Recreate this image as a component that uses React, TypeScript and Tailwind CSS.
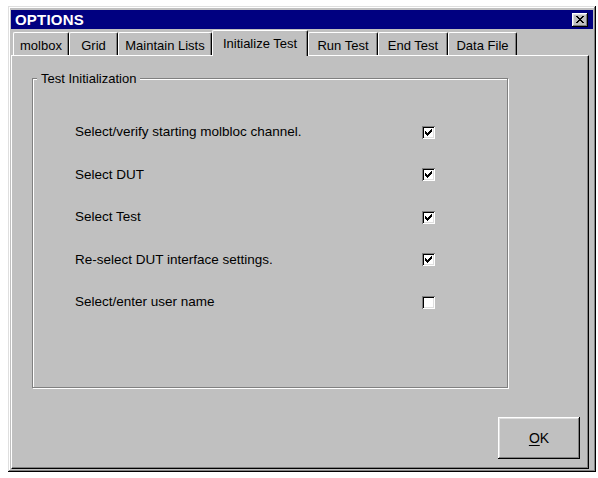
import React from 'react';

// Win95 style "OPTIONS" dialog, Initialize Test tab

const tabs = [
  { label: 'molbox', width: 'w-[56px]' },
  { label: 'Grid', width: 'w-[49px]' },
  { label: 'Maintain Lists', width: 'w-[94px]' },
  { label: 'Initialize Test', width: 'w-[96px]', active: true },
  { label: 'Run Test', width: 'w-[70px]' },
  { label: 'End Test', width: 'w-[70px]' },
  { label: 'Data File', width: 'w-[69px]' },
];

const steps = [
  { label: 'Select/verify starting molbloc channel.', checked: true },
  { label: 'Select DUT', checked: true },
  { label: 'Select Test', checked: true },
  { label: 'Re-select DUT interface settings.', checked: true },
  { label: 'Select/enter user name', checked: false },
];

const CheckBox: React.FC<{ checked: boolean }> = ({ checked }) => (
  <span className="block w-[13px] h-[13px] bg-white shadow-[inset_1px_1px_0_#808080,inset_-1px_-1px_0_#ffffff,inset_2px_2px_0_#000000,inset_-2px_-2px_0_#dfdfdf]">
    {checked && (
      <svg width="13" height="13" viewBox="0 0 13 13" shapeRendering="crispEdges">
        <path
          fill="#000"
          d="M9 3h1v1h-1z M8 4h2v1h-2z M3 5h1v1h-1z M7 5h3v1h-3z M3 6h2v1h-2z M6 6h3v1h-3z M3 7h5v1h-5z M4 8h3v1h-3z M5 9h1v1h-1z"
        />
      </svg>
    )}
  </span>
);

const App: React.FC = () => {
  return (
    <div className="w-[598px] h-[478px] bg-white pl-[8px] pt-[6px] font-['Liberation_Sans',Arial,sans-serif] text-black">
      {/* window frame */}
      <div className="w-[588px] h-[466px] bg-[#c0c0c0] px-[3px] pt-[4px] pb-[3px] flex flex-col shadow-[inset_-1px_-1px_0_#000000,inset_1px_1px_0_#dfdfdf,inset_-2px_-2px_0_#808080,inset_2px_2px_0_#ffffff]">
        {/* title bar */}
        <div className="h-[19px] bg-[#000080] flex items-center justify-between pl-[4px] pr-[5px]">
          <span className="text-white font-bold text-[15px] leading-none tracking-[0.2px]">OPTIONS</span>
          <span className="w-[16px] h-[14px] bg-[#c0c0c0] flex items-center justify-center shadow-[inset_-1px_-1px_0_#000000,inset_1px_1px_0_#ffffff,inset_-2px_-2px_0_#808080,inset_2px_2px_0_#dfdfdf]">
            <svg width="8" height="7" viewBox="0 0 8 7" shapeRendering="crispEdges">
              <path
                fill="#000"
                d="M0 0h2v1h-2z M6 0h2v1h-2z M1 1h2v1h-2z M5 1h2v1h-2z M2 2h4v1h-4z M3 3h2v1h-2z M2 4h4v1h-4z M1 5h2v1h-2z M5 5h2v1h-2z M0 6h2v1h-2z M6 6h2v1h-2z"
              />
            </svg>
          </span>
        </div>

        {/* tab strip */}
        <div className="mt-[1px] h-[25px] flex items-end pl-[2px] relative z-10 text-[13px]">
          {tabs.map((tab) =>
            tab.active ? (
              <div
                key={tab.label}
                className={`${tab.width} h-[26px] -mb-[1px] bg-[#c0c0c0] border-t border-l border-white border-r border-r-black shadow-[inset_-1px_0_0_#808080] rounded-t-[2px] flex justify-center pt-[3px]`}
              >
                {tab.label}
              </div>
            ) : (
              <div
                key={tab.label}
                className={`${tab.width} h-[23px] bg-[#c0c0c0] border-t border-l border-white border-r border-r-black shadow-[inset_-1px_0_0_#808080] rounded-t-[2px] flex justify-center pt-[3px]`}
              >
                {tab.label}
              </div>
            )
          )}
        </div>

        {/* tab panel */}
        <div className="w-[578px] h-[414px] border-t border-l border-white border-r border-b border-r-black border-b-black shadow-[inset_-1px_-1px_0_#808080] flex flex-col">
          <div className="relative ml-[20px] mt-[22px] w-[476px] h-[310px] border border-[#808080] shadow-[1px_1px_0_#ffffff,inset_1px_1px_0_#ffffff]">
            <span className="absolute left-[4px] -top-[8px] px-[4px] bg-[#c0c0c0] text-[13px] leading-[15px]">
              Test Initialization
            </span>
            <div className="pt-[32px] flex flex-col">
              {steps.map((step) => (
                <div key={step.label} className="h-[42.5px] flex items-center pl-[42px]">
                  <span className="w-[347px] text-[13.5px]">{step.label}</span>
                  <CheckBox checked={step.checked} />
                </div>
              ))}
            </div>
          </div>

          <div className="flex justify-end mt-[29px] mr-[8px]">
            <button className="w-[82px] h-[42px] bg-[#c0c0c0] text-[14px] flex items-center justify-center shadow-[inset_-1px_-1px_0_#000000,inset_1px_1px_0_#ffffff,inset_-2px_-2px_0_#808080,inset_2px_2px_0_#dfdfdf]">
              <span>
                <span className="underline underline-offset-2">O</span>K
              </span>
            </button>
          </div>
        </div>
      </div>
    </div>
  );
};

export default App;
